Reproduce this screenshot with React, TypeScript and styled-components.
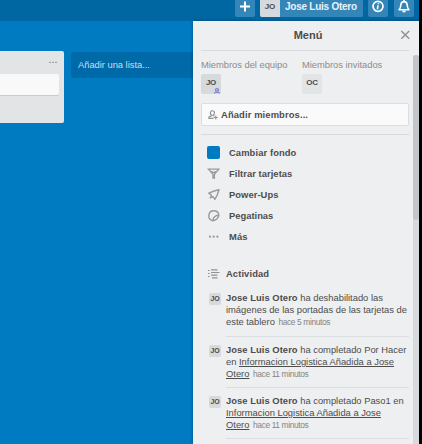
import React from "react";
import styled, { createGlobalStyle } from "styled-components";

const Global = createGlobalStyle`
  * { box-sizing: border-box; }
  body { margin: 0; overflow: hidden; font-family: "Liberation Sans", Arial, sans-serif; color: #4d4d4d; }
`;

const Screen = styled.div`
  width: 422px;
  height: 444px;
  overflow: hidden;
  display: flex;
  flex-direction: column;
  background: #007bc2;
  border-right: 3px solid #000;
`;
const Header = styled.header`
  flex: none;
  height: 21px;
  display: flex;
  justify-content: flex-end;
  align-items: flex-start;
  padding-right: 5px;
  background: #0067a3;
`;
const HeaderButton = styled.div<{ $w: number; $gap: number }>`
  width: ${(p) => p.$w}px;
  height: 17px;
  margin-left: ${(p) => p.$gap}px;
  display: flex;
  align-items: center;
  justify-content: center;
  background: #3586b8;
  border-radius: 0 0 2px 2px;
  overflow: hidden;
  svg { display: block; }
`;
const HeaderAvatar = styled.div`
  width: 20px;
  height: 17px;
  background: #d6dadc;
  color: #4d4d4d;
  font: bold 8px/13px "Liberation Sans", sans-serif;
  text-align: center;
`;
const HeaderName = styled.div`
  flex: 1;
  height: 17px;
  padding-left: 5px;
  color: #e8f2f8;
  font-size: 10px;
  font-weight: bold;
  line-height: 14px;
  letter-spacing: -0.25px;
  white-space: nowrap;
`;
const Body = styled.main`
  flex: 1;
  min-height: 0;
  display: flex;
`;
const Board = styled.section`
  width: 193px;
  flex: none;
  display: flex;
  align-items: flex-start;
  padding-top: 30px;
  overflow: hidden;
`;
const List = styled.div`
  width: 64px;
  height: 72px;
  background: #e2e4e6;
  border-radius: 0 2px 2px 0;
  display: flex;
  flex-direction: column;
  padding-right: 5px;
`;
const ListTop = styled.div`
  height: 23px;
  display: flex;
  justify-content: flex-end;
  padding: 10px 2px 0 0;
`;
const Card = styled.div`
  height: 21px;
  background: #f9f9f9;
  border-radius: 0 2px 2px 0;
  box-shadow: 0 1px 0 #c8cacc;
`;
const AddList = styled.div`
  flex: 1;
  height: 26px;
  margin: 1px 0 0 7px;
  padding-left: 7px;
  background: #006aa8;
  border-radius: 3px 0 0 3px;
  color: #c4dfef;
  font-size: 9.4px;
  line-height: 25px;
  letter-spacing: -0.03px;
  white-space: nowrap;
`;
const Menu = styled.aside`
  flex: 1;
  min-width: 0;
  background: #edeff0;
  box-shadow: 0 0 3px rgba(0, 30, 60, 0.5);
  display: flex;
  flex-direction: column;
`;
const MenuHead = styled.div`
  height: 30px;
  flex: none;
  margin: 0 10px 0 8px;
  border-bottom: 1px solid #d8dbdd;
  display: grid;
  grid-template-columns: 15px 1fr 15px;
  align-items: center;
  svg { margin-left: 3px; margin-top: -1px; }
`;
const MenuTitle = styled.h1`
  margin: 0;
  padding-left: 6px;
  text-align: center;
  font-size: 11px;
  line-height: 27px;
  color: #4d4d4d;
`;
const MenuScroll = styled.div`
  flex: 1;
  min-height: 0;
  display: flex;
`;
const Content = styled.div`
  width: 220px;
  padding: 0 4px 0 8px;
  overflow: hidden;
`;
const Track = styled.div`
  width: 6px;
  margin-top: 4px;
  background: #d6dadd;
  border-radius: 3px 3px 0 0;
`;
const Thumb = styled.div`
  height: 165px;
  background: #c2c6c9;
  border-radius: 3px;
`;
const Members = styled.div`
  display: grid;
  grid-template-columns: 101px 1fr;
`;
const Label = styled.div`
  padding-top: 8px;
  height: 23px;
  font-size: 9.4px;
  line-height: 12px;
  letter-spacing: -0.03px;
  color: #8c8c8c;
  white-space: nowrap;
`;
const Avatar = styled.div<{ $bg: string }>`
  position: relative;
  width: 20px;
  height: 20px;
  border-radius: 2px;
  background: ${(p) => p.$bg};
  color: #4d4d4d;
  font-size: 8px;
  font-weight: bold;
  line-height: 18px;
  letter-spacing: -0.3px;
  text-align: center;
`;
const AdminBadge = styled.svg`
  position: absolute;
  right: 1px;
  bottom: 0;
`;
const AddMembers = styled.div`
  height: 23px;
  width: 208px;
  margin-top: 9px;
  padding-left: 6px;
  display: flex;
  align-items: center;
  gap: 3px;
  background: #fafafa;
  border: 1px solid #dcdfe1;
  border-radius: 2px;
`;
const Strong = styled.span<{ $ls?: number }>`
  font-size: 9.4px;
  font-weight: bold;
  line-height: 12px;
  letter-spacing: ${(p) => p.$ls ?? 0.1}px;
  color: #4d4d4d;
  white-space: nowrap;
`;
const Rule = styled.div`
  height: 1px;
  margin: 8px -1px 7px 0;
  width: 208px;
  background: #d6dadc;
`;
const Row = styled.div`
  height: 21px;
  display: grid;
  grid-template-columns: 28px 1fr;
  align-items: center;
`;
const IconCell = styled.div`
  padding-left: 6px;
  display: flex;
  svg { display: block; }
`;
const Swatch = styled.div`
  width: 13px;
  height: 13px;
  border-radius: 2px;
  background: #007bc2;
`;
const ActivityHead = styled(Row)`
  margin-top: 16px;
  grid-template-columns: 25px 1fr;
`;
const Feed = styled.div`
  display: flex;
  flex-direction: column;
  gap: 7px;
  padding-top: 8px;
`;
const Entry = styled.div<{ $h: number }>`
  height: ${(p) => p.$h}px;
  padding-left: 8px;
  display: grid;
  grid-template-columns: 17px 183px;
`;
const SmallAvatar = styled.div`
  margin-top: 1px;
  width: 12px;
  height: 12px;
  border-radius: 2px;
  background: #d6dadc;
  font-size: 7px;
  font-weight: bold;
  line-height: 12px;
  text-align: center;
  letter-spacing: -0.2px;
`;
const EntryText = styled.div`
  border-bottom: 1px solid #dcdfe1;
`;
const Line = styled.div`
  height: 12px;
  font-size: 9.4px;
  line-height: 12px;
  letter-spacing: -0.01px;
  white-space: nowrap;
`;
const Link = styled.span`
  text-decoration: underline;
  text-underline-offset: 1px;
`;
const Time = styled.span`
  margin-left: 1px;
  font-size: 8.4px;
  letter-spacing: -0.37px;
  color: #858585;
`;

const Person = ({ color, size }: { color: string; size: number }) => (
  <svg width={size} height={size} viewBox="0 0 9 9" fill="none" stroke={color} strokeWidth="1">
    <ellipse cx="4" cy="2.8" rx="1.8" ry="2.1" />
    <path d="M3 4.8L2.6 5.6L.8 6.3V7.5H5M5 5.2L5.5 5.6M7 5V8.6M5.2 6.8H8.8" />
  </svg>
);

const Author = () => <Strong $ls={0.05}>Jose Luis Otero</Strong>;

export default function App() {
  return (
    <Screen>
      <Global />
      <Header>
        <HeaderButton $w={20} $gap={0}>
          <svg width="12" height="17" viewBox="0 0 12 17" stroke="#fff" strokeWidth="2"><path d="M1 6.5H11M6 1.5V11.5" /></svg>
        </HeaderButton>
        <HeaderButton $w={103} $gap={5}>
          <HeaderAvatar>JO</HeaderAvatar>
          <HeaderName>Jose Luis Otero</HeaderName>
        </HeaderButton>
        <HeaderButton $w={20} $gap={5}>
          <svg width="14" height="17" viewBox="0 0 14 17" fill="none" stroke="#fff">
            <circle cx="7" cy="6.3" r="5" strokeWidth="1.7" />
            <path d="M7.6 3.2L7.3 4.4M7 5.4L6.4 9.3" strokeWidth="1.6" />
          </svg>
        </HeaderButton>
        <HeaderButton $w={20} $gap={6}>
          <svg width="14" height="17" viewBox="0 0 14 17" fill="none" stroke="#fff" strokeWidth="1.6">
            <path d="M7 0V1.5M2 9.8C3.6 8.5 3.6 7 3.8 5C4 2.8 5 1.6 7 1.6S10 2.8 10.2 5C10.4 7 10.4 8.5 12 9.8Z" strokeLinejoin="round" />
            <path d="M5.5 11.4H8.5" strokeWidth="1.8" />
          </svg>
        </HeaderButton>
      </Header>
      <Body>
        <Board>
          <List>
            <ListTop>
              <svg width="8" height="3" viewBox="0 0 8 3" fill="#a0a2a5"><path d="M0 .7h2v1.3H0zM3 .7h2v1.3H3zM6 .7h2v1.3H6z" /></svg>
            </ListTop>
            <Card />
          </List>
          <AddList>Añadir una lista...</AddList>
        </Board>
        <Menu>
          <MenuHead>
            <span />
            <MenuTitle>Menú</MenuTitle>
            <svg width="15" height="10" viewBox="0 0 15 10" stroke="#929292" strokeWidth="1.5"><path d="M4.3 1L12.2 8.8M12.2 1L4.3 8.8" /></svg>
          </MenuHead>
          <MenuScroll>
            <Content>
              <Members>
                <div>
                  <Label>Miembros del equipo</Label>
                  <Avatar $bg="#d6dadc">
                    JO
                    <AdminBadge width="6" height="6" viewBox="0 0 6 6" fill="none" stroke="#6c68c8">
                      <path d="M1.7 .8H4.3V3H1.7ZM.7 5.5V4.3H5.3V5.5" strokeWidth=".9" />
                    </AdminBadge>
                  </Avatar>
                </div>
                <div>
                  <Label>Miembros invitados</Label>
                  <Avatar $bg="#e2e4e6">OC</Avatar>
                </div>
              </Members>
              <AddMembers>
                <Person color="#929292" size={10} />
                <Strong $ls={0.12}>Añadir miembros...</Strong>
              </AddMembers>
              <Rule />
              <Row>
                <IconCell><Swatch /></IconCell>
                <Strong>Cambiar fondo</Strong>
              </Row>
              <Row>
                <IconCell>
                  <svg width="13" height="13" viewBox="0 0 13 13" fill="none" stroke="#999" strokeWidth="1.3"><path d="M1.5 2.2H11.8L7.4 7.2V11.2H6V7.2ZM3.8 4.6L6.6 5.4L9.4 4.6" /></svg>
                </IconCell>
                <Strong $ls={0.05}>Filtrar tarjetas</Strong>
              </Row>
              <Row>
                <IconCell>
                  <svg width="13" height="13" viewBox="0 0 13 13" fill="none" stroke="#999" strokeWidth="1.4" strokeLinejoin="round"><path d="M12 1.6L7.2 3L1.8 5.2L4.3 7.1L4 9L6.2 8.8L8 11.3L10.4 6.5ZM4.2 9L2.8 10.3" /></svg>
                </IconCell>
                <Strong $ls={0.05}>Power-Ups</Strong>
              </Row>
              <Row>
                <IconCell>
                  <svg width="13" height="13" viewBox="0 0 13 13" fill="none" stroke="#999" strokeWidth="1.4"><path d="M5.8 11.7A5 5 0 1 1 11.8 6.2C11.8 8.8 9 11.5 5.8 11.7C5.8 8.5 8.5 6.2 11.8 6.2" /></svg>
                </IconCell>
                <Strong $ls={0}>Pegatinas</Strong>
              </Row>
              <Row>
                <IconCell>
                  <svg width="13" height="13" viewBox="0 0 13 13" fill="#999"><circle cx="3" cy="6.7" r="1.1" /><circle cx="6.7" cy="6.7" r="1.1" /><circle cx="10.4" cy="6.7" r="1.1" /></svg>
                </IconCell>
                <Strong>Más</Strong>
              </Row>
              <ActivityHead>
                <IconCell>
                  <svg width="14" height="13" viewBox="0 0 14 13" fill="none" stroke="#929292" strokeWidth="1.2"><path d="M1 3.5H2.6M4 2.8H10.5M1 6.5H2.6M4 5.5H12.5M4 8.2H10.5M5 10.9H10.5M1 9.5H2.6" /></svg>
                </IconCell>
                <Strong>Actividad</Strong>
              </ActivityHead>
              <Feed>
                <Entry $h={45}>
                  <SmallAvatar>JO</SmallAvatar>
                  <EntryText>
                    <Line><Author /> ha deshabilitado las</Line>
                    <Line>imágenes de las portadas de las tarjetas de</Line>
                    <Line>este tablero <Time>hace 5 minutos</Time></Line>
                  </EntryText>
                </Entry>
                <Entry $h={44}>
                  <SmallAvatar>JO</SmallAvatar>
                  <EntryText>
                    <Line><Author /> ha completado Por Hacer</Line>
                    <Line>en <Link>Informacion Logistica Añadida a Jose</Link></Line>
                    <Line><Link>Otero</Link> <Time>hace 11 minutos</Time></Line>
                  </EntryText>
                </Entry>
                <Entry $h={44}>
                  <SmallAvatar>JO</SmallAvatar>
                  <EntryText>
                    <Line><Author /> ha completado Paso1 en</Line>
                    <Line><Link>Informacion Logistica Añadida a Jose</Link></Line>
                    <Line><Link>Otero</Link> <Time>hace 11 minutos</Time></Line>
                  </EntryText>
                </Entry>
              </Feed>
            </Content>
            <Track><Thumb /></Track>
          </MenuScroll>
        </Menu>
      </Body>
    </Screen>
  );
}
